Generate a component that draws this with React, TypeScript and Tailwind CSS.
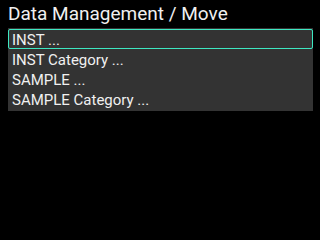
import React from 'react';

const items = ['INST ...', 'INST Category ...', 'SAMPLE ...', 'SAMPLE Category ...'];

const App = () => {
  const selected = 0;
  return (
    <div
      className="w-[320px] h-[240px] bg-black text-[#f0f0f0] overflow-hidden"
      style={{ fontFamily: 'Roboto, "Liberation Sans", sans-serif' }}
    >
      <div className="h-[28px] pt-[2px] pl-[8px] text-[19px] leading-[24px]">
        Data Management / Move
      </div>
      <div className="ml-[8px] w-[305px] bg-[#333333] pt-[1px] pb-[2px]">
        {items.map((item, i) => (
          <div
            key={item}
            className={
              i === selected
                ? 'h-[20px] pl-[3px] text-[15px] leading-[20px] border border-[#3ee8c2] rounded-[2px]'
                : 'h-[20px] pl-[4px] text-[15px] leading-[22px]'
            }
          >
            {item}
          </div>
        ))}
      </div>
    </div>
  );
};

export default App;
